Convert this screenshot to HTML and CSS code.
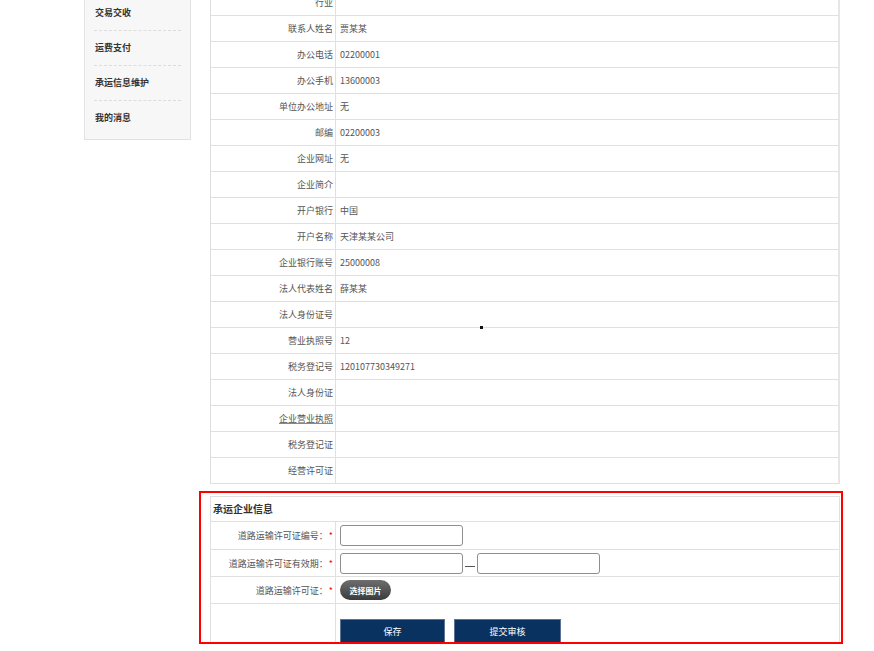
FILE: index.html
```html
<!DOCTYPE html>
<html lang="zh">
<head>
<meta charset="utf-8">
<title>承运企业信息</title>
<link rel="stylesheet" href="styles.css">
</head>
<body>
<div class="page">
  <div class="sidebar">
    <div class="side-item">交易交收</div>
    <div class="side-item">运费支付</div>
    <div class="side-item">承运信息维护</div>
    <div class="side-item last">我的消息</div>
  </div>
  <div class="main">
    <div class="info">
      <div class="row"><div class="lab">行业</div><div class="val"></div></div>
      <div class="row"><div class="lab">联系人姓名</div><div class="val">贾某某</div></div>
      <div class="row"><div class="lab">办公电话</div><div class="val">02200001</div></div>
      <div class="row"><div class="lab">办公手机</div><div class="val">13600003</div></div>
      <div class="row"><div class="lab">单位办公地址</div><div class="val">无</div></div>
      <div class="row"><div class="lab">邮编</div><div class="val">02200003</div></div>
      <div class="row"><div class="lab">企业网址</div><div class="val">无</div></div>
      <div class="row"><div class="lab">企业简介</div><div class="val"></div></div>
      <div class="row"><div class="lab">开户银行</div><div class="val">中国</div></div>
      <div class="row"><div class="lab">开户名称</div><div class="val">天津某某公司</div></div>
      <div class="row"><div class="lab">企业银行账号</div><div class="val">25000008</div></div>
      <div class="row"><div class="lab">法人代表姓名</div><div class="val">薛某某</div></div>
      <div class="row"><div class="lab">法人身份证号</div><div class="val"></div></div>
      <div class="row"><div class="lab">营业执照号</div><div class="val">12</div></div>
      <div class="row"><div class="lab">税务登记号</div><div class="val">120107730349271</div></div>
      <div class="row"><div class="lab">法人身份证</div><div class="val"></div></div>
      <div class="row"><div class="lab"><span class="link">企业营业执照</span></div><div class="val"></div></div>
      <div class="row"><div class="lab">税务登记证</div><div class="val"></div></div>
      <div class="row"><div class="lab">经营许可证</div><div class="val"></div></div>
    </div>
    <div class="highlight">
      <div class="form">
        <div class="form-title">承运企业信息</div>
        <div class="frow r1">
          <div class="flab">道路运输许可证编号：<span class="req">*</span></div>
          <div class="fval"><input class="inp" type="text"></div>
        </div>
        <div class="frow r2">
          <div class="flab">道路运输许可证有效期：<span class="req">*</span></div>
          <div class="fval"><input class="inp" type="text"><span class="dash"></span><input class="inp" type="text"></div>
        </div>
        <div class="frow r3">
          <div class="flab">道路运输许可证：<span class="req">*</span></div>
          <div class="fval"><button class="pick" type="button">选择图片</button></div>
        </div>
        <div class="frow r4">
          <div class="flab"></div>
          <div class="fval btns"><button class="navy save" type="button">保存</button><button class="navy submit" type="button">提交审核</button></div>
        </div>
      </div>
    </div>
  </div>
</div>
<span class="cursor-dot"></span>
</body>
</html>
```
FILE: styles.css
```css
html, body {
  margin: 0;
  padding: 0;
  background: #fff;
}
body {
  height: 651px;
  overflow: hidden;
  position: relative;
  font-family: "Noto Sans CJK SC", "Microsoft YaHei", sans-serif;
  font-size: 9px;
  color: #555;
}
.page {
  display: flex;
  align-items: flex-start;
  gap: 8px;
  padding-left: 84px;
  margin-top: -11px;
}
.sidebar {
  width: 107px;
  box-sizing: border-box;
  background: #f7f7f7;
  border: 1px solid #e2e2e2;
  padding: 6px 0 4px;
}
.side-item {
  height: 34px;
  line-height: 34px;
  margin: 0 9px;
  padding-left: 1px;
  border-bottom: 1px dashed #dcdcdc;
  font-weight: bold;
  color: #333;
}
.side-item.last {
  border-bottom: none;
}
.main {
  width: 644px;
}
.info {
  margin-left: 11px;
  width: 630px;
  box-sizing: border-box;
  border: 1px solid #dedede;
  border-bottom: none;
  border-right: 2px solid #e6e6e6;
}
.row {
  display: grid;
  grid-template-columns: 125px 1fr;
  height: 26px;
  box-sizing: border-box;
  border-bottom: 1px solid #e0e0e0;
}
.lab {
  border-right: 1px solid #e0e0e0;
  text-align: right;
  padding-right: 2px;
  line-height: 25px;
}
.val {
  padding-left: 4px;
  line-height: 25px;
}
.link {
  text-decoration: underline;
  text-decoration-color: #888;
}
.highlight {
  margin-top: 7px;
  height: 153px;
  box-sizing: border-box;
  border: 2px solid #f00;
  padding: 3px 1px 0 9px;
  overflow: hidden;
}
.form {
  width: 630px;
  box-sizing: border-box;
  border: 1px solid #e0e0e0;
  border-bottom: none;
}
.form-title {
  height: 25px;
  box-sizing: border-box;
  border-bottom: 1px solid #e0e0e0;
  padding-left: 2px;
  line-height: 24px;
  font-size: 10px;
  font-weight: bold;
  color: #333;
}
.frow {
  display: grid;
  grid-template-columns: 125px 1fr;
  box-sizing: border-box;
  border-bottom: 1px solid #e0e0e0;
}
.frow.r1 { height: 28px; }
.frow.r2 { height: 27px; }
.frow.r3 { height: 27px; }
.frow.r4 { height: 60px; }
.flab {
  border-right: 1px solid #e0e0e0;
  text-align: right;
  padding-right: 2px;
  display: flex;
  align-items: center;
  justify-content: flex-end;
}
.req {
  color: #f00;
  margin-left: 1px;
}
.fval {
  display: flex;
  align-items: center;
  padding-left: 4px;
}
.inp {
  width: 123px;
  height: 21px;
  box-sizing: border-box;
  border: 1px solid #8e8e8e;
  border-radius: 3px;
  padding: 0 3px;
  margin: 0;
  font-family: inherit;
  font-size: 9px;
  background: #fff;
}
.dash {
  width: 10px;
  height: 1px;
  background: #555;
  margin: 6px 2px 0 2px;
}
.pick {
  width: 51px;
  height: 20px;
  border: none;
  border-radius: 10px;
  background: linear-gradient(#6e6e6e, #3c3c3c);
  color: #fff;
  font-family: inherit;
  font-size: 8px;
  font-weight: bold;
  padding: 0;
  margin: 0;
}
.btns {
  align-items: flex-start;
  padding-top: 15px;
  gap: 9px;
}
.navy {
  height: 24px;
  box-sizing: border-box;
  border: 1px solid #5d7393;
  background: #0a3261;
  color: #fff;
  font-family: inherit;
  font-size: 9px;
  padding: 0;
  margin: 0;
}
.save { width: 105px; }
.submit { width: 107px; }
.cursor-dot {
  position: absolute;
  left: 480px;
  top: 326px;
  width: 3px;
  height: 3px;
  background: #111;
}
```
